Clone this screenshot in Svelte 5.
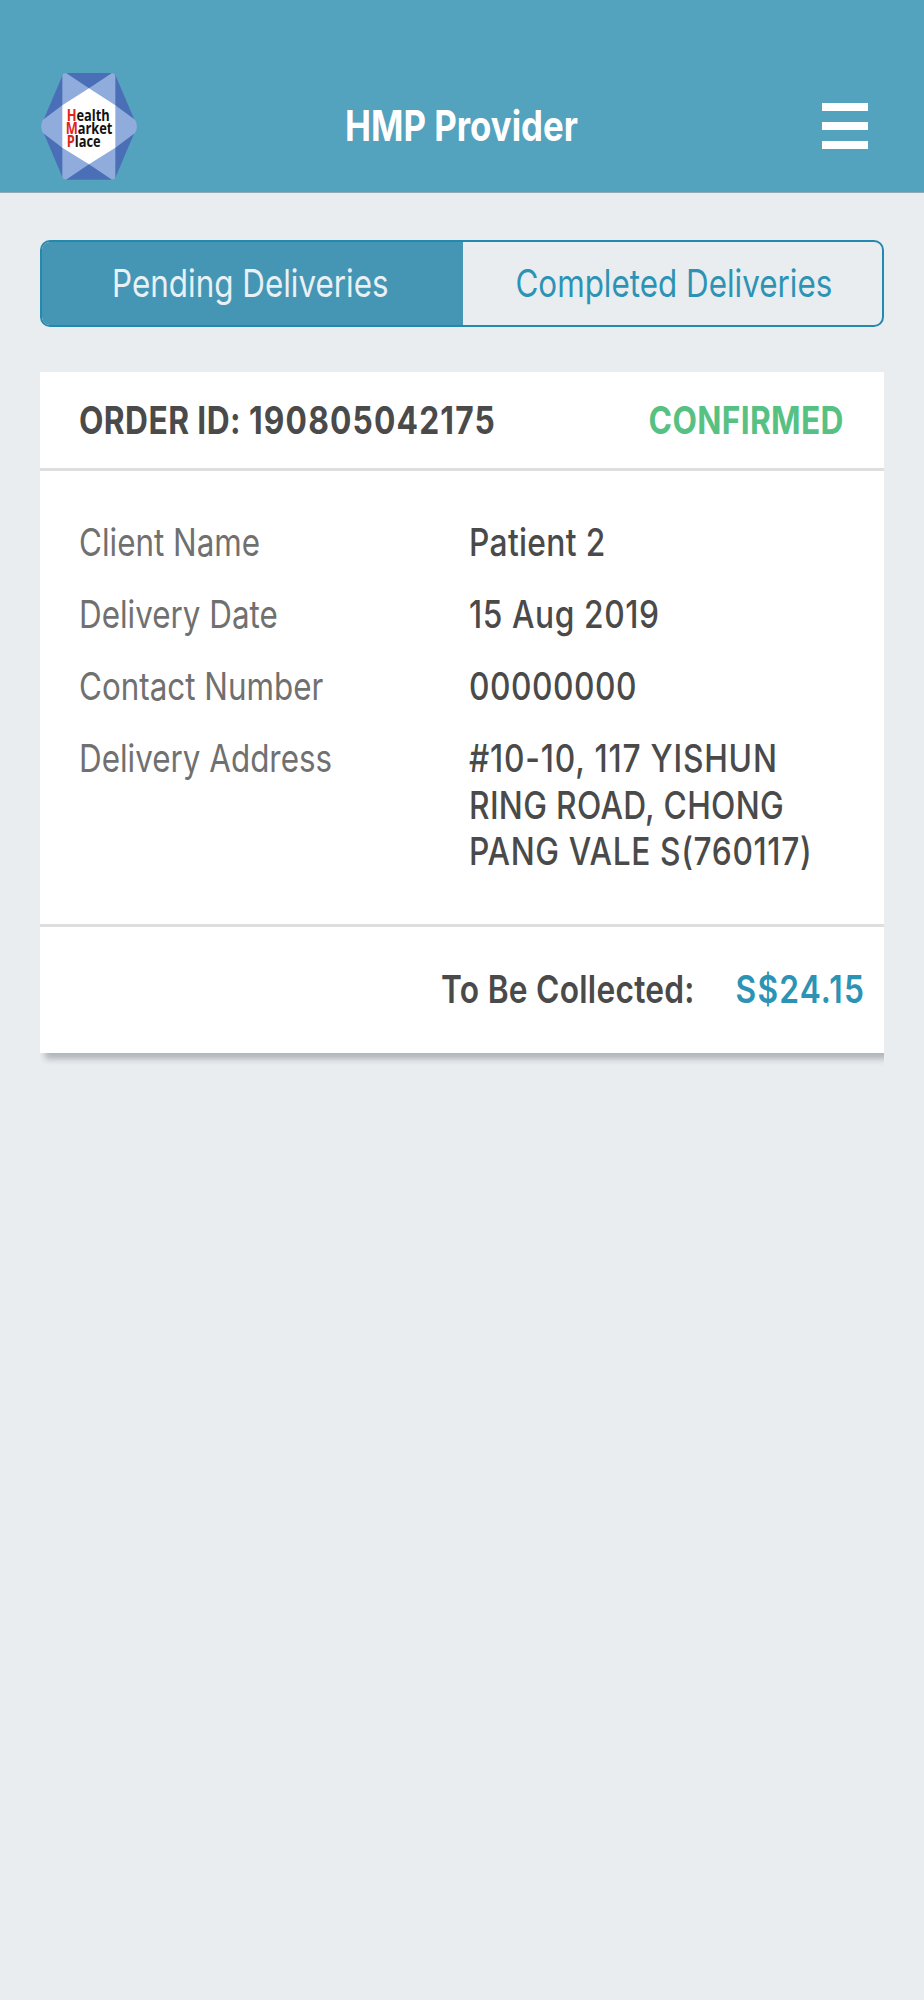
<script>
    let activeTab = $state("pending");

    const tabs = [
        { id: "pending", label: "Pending Deliveries" },
        { id: "completed", label: "Completed Deliveries" },
    ];

    const order = {
        id: "190805042175",
        status: "CONFIRMED",
        amount: "S$24.15",
        details: [
            { label: "Client Name", lines: [{ text: "Patient 2", tracking: 0.4 }] },
            { label: "Delivery Date", lines: [{ text: "15 Aug 2019", tracking: 0.7 }] },
            { label: "Contact Number", lines: [{ text: "00000000", tracking: 0.6 }] },
            {
                label: "Delivery Address",
                lines: [
                    { text: "#10-10, 117 YISHUN", tracking: 0.95 },
                    { text: "RING ROAD, CHONG", tracking: 0.4 },
                    { text: "PANG VALE S(760117)", tracking: 0.75 },
                ],
            },
        ],
    };
</script>

<div class="page">
    <header class="header">
        <svg class="logo" viewBox="33 38 288 321" preserveAspectRatio="none">
            <path
                d="M108 38H247Q253 38 256 44L319 192Q322 198 319 204L256 352Q253 358 247 358H108Q101 358 98 352L35 204Q32 198 35 192L98 44Q101 38 108 38Z"
                fill="#4b6fb6"
            />
            <path
                d="M97 135L39 178Q27 198 39 218L97 262V350Q99 358 108 358L177 312L246 358Q256 358 256 350V262L315 218Q327 198 315 178L256 135V46Q255 38 246 38L177 84L108 38Q98 38 97 46Z"
                fill="#90acdd"
            />
            <path d="M177 84L256 135V262L177 312L97 262V135Z" fill="#fff" />
            <g class="logo-text">
                <text transform="translate(110 181) scale(0.77 1)"><tspan class="red">H</tspan>ealth</text>
                <text transform="translate(107 220) scale(0.77 1)"><tspan class="red">M</tspan>arket</text>
                <text transform="translate(110 259) scale(0.77 1)"><tspan class="red">P</tspan>lace</text>
            </g>
        </svg>
        <h1 class="title">HMP Provider</h1>
        <button class="menu-btn" aria-label="Menu">
            <span></span>
            <span></span>
            <span></span>
        </button>
    </header>

    <main class="content">
        <div class="tabs">
            {#each tabs as tab}
                <button
                    class="tab {tab.id} {activeTab === tab.id ? 'active' : ''}"
                    onclick={() => (activeTab = tab.id)}
                >
                    <span>{tab.label}</span>
                </button>
            {/each}
        </div>

        <div class="card">
            <div class="card-header">
                <span class="order-id">ORDER ID: <b>{order.id}</b></span>
                <span class="status">{order.status}</span>
            </div>

            <div class="card-body">
                {#each order.details as row}
                    <div class="row">
                        <div class="label"><span>{row.label}</span></div>
                        <div class="value">
                            {#each row.lines as line}
                                <span style="letter-spacing: {line.tracking}px">{line.text}</span>
                            {/each}
                        </div>
                    </div>
                {/each}
            </div>

            <div class="card-footer">
                <span class="total-label">To Be Collected:</span>
                <span class="amount">{order.amount}</span>
            </div>
        </div>
    </main>
</div>

<style>
    :global(body) {
        margin: 0;
        background: #e9edf0;
    }

    .page {
        min-height: 2000px;
        background: #e9edf0;
        font-family: Inter, "Liberation Sans", sans-serif;
        font-size: 38px;
        color: #4a4a4a;
    }

    button {
        margin: 0;
        padding: 0;
        border: none;
        background: none;
        font: inherit;
        color: inherit;
    }

    /* condensed type */
    .title,
    .tab span,
    .order-id,
    .status,
    .label span,
    .value span,
    .total-label,
    .amount {
        display: block;
        white-space: nowrap;
        transform: scaleX(0.835);
        transform-origin: left center;
    }

    .header {
        box-sizing: border-box;
        height: 193px;
        padding: 60px 56px 0 41px;
        display: grid;
        grid-template-columns: 96px 1fr 46px;
        align-items: center;
        background: #53a2be;
        border-bottom: 1px solid #94a8b3;
    }

    .logo {
        width: 96px;
        height: 107px;
    }

    .logo-text {
        font-family: "Open Sans", "Noto Sans", sans-serif;
        font-size: 50px;
        font-weight: 700;
        fill: #111;
    }

    .logo-text .red {
        fill: #e0241b;
    }

    .title {
        margin: 0 36px 1px 0;
        text-align: center;
        font-size: 42px;
        font-weight: 650;
        color: #fff;
        transform: scaleX(0.828);
        transform-origin: center;
    }

    .menu-btn {
        display: flex;
        flex-direction: column;
        gap: 11px;
    }

    .menu-btn span {
        width: 46px;
        height: 8px;
        background: #fff;
    }

    .content {
        padding: 47px 40px 0;
    }

    .tabs {
        box-sizing: border-box;
        height: 87px;
        display: grid;
        grid-template-columns: 421px 1fr;
        border: 2px solid #2389ae;
        border-radius: 10px;
        overflow: hidden;
    }

    .tab {
        display: flex;
        align-items: center;
        justify-content: center;
        padding: 0 0 2px 3px;
        color: #2c93b5;
    }

    .tab span {
        transform: scaleX(0.826);
        transform-origin: center;
    }

    .tab.pending {
        padding: 0 5px 2px 0;
    }

    .tab.active {
        background: #4596b5;
        color: #e9f1f5;
    }

    .card {
        margin-top: 45px;
        background: #fff;
        box-shadow: 5px 6px 6px rgba(60, 65, 75, 0.32);
        clip-path: inset(0 0 -20px 0);
    }

    .card-header {
        height: 96px;
        padding: 0 40px 0 39px;
        display: flex;
        align-items: center;
        justify-content: space-between;
        border-bottom: 3px solid #dedede;
        font-weight: 650;
    }

    .order-id {
        letter-spacing: 0.5px;
    }

    .order-id b {
        font-weight: 650;
        letter-spacing: 1.4px;
    }

    .status {
        color: #57c184;
        letter-spacing: 0.4px;
        transform-origin: right center;
    }

    .card-body {
        padding: 48px 39px 49px;
        display: flex;
        flex-direction: column;
        gap: 25.5px;
        line-height: 46.5px;
    }

    .row {
        display: grid;
        grid-template-columns: 389.5px 1fr;
    }

    .label {
        color: #707070;
    }

    .label span {
        transform: scaleX(0.826);
    }

    .value {
        font-weight: 530;
    }

    .card-footer {
        height: 124px;
        padding: 0 19px 2px 0;
        display: flex;
        align-items: center;
        justify-content: flex-end;
        border-top: 3px solid #dedede;
        font-weight: 630;
    }

    .total-label,
    .amount {
        transform-origin: right center;
    }

    .total-label {
        letter-spacing: 0.3px;
    }

    .amount {
        margin-left: 15px;
        font-weight: 580;
        letter-spacing: 1.4px;
        color: #2c93b5;
    }
</style>
